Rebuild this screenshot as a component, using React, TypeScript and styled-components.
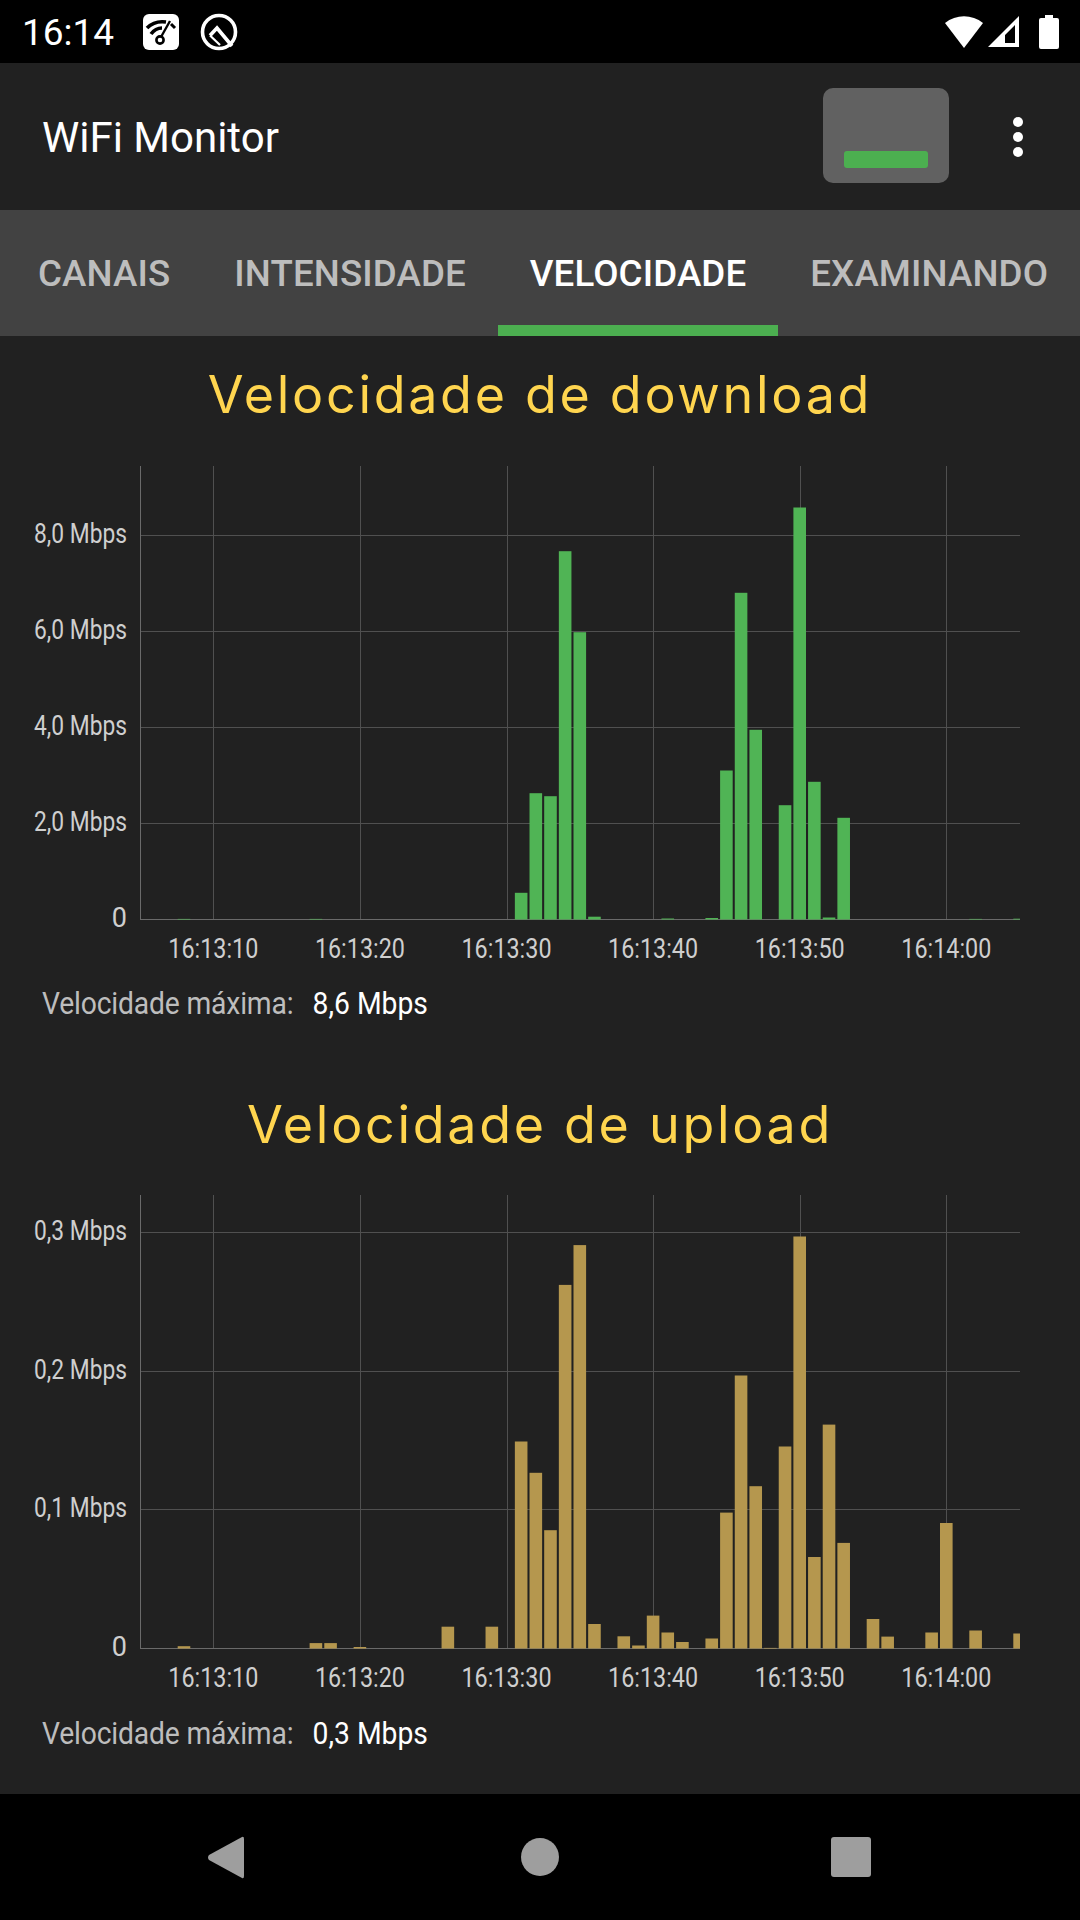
import { FunctionComponent } from 'react';
import styled, { createGlobalStyle } from 'styled-components';

const GlobalStyle = createGlobalStyle`
  html, body {
    margin: 0;
    padding: 0;
    background: #000;
  }
`;

const Screen = styled.div`
  width: 1080px;
  height: 1920px;
  display: flex;
  flex-direction: column;
  overflow: hidden;
  background: #212121;
  font-family: Roboto, "Liberation Sans", sans-serif;
`;

const StatusBar = styled.div`
  height: 63px;
  flex: none;
  box-sizing: border-box;
  padding: 0 21px 0 22px;
  display: flex;
  align-items: center;
  background: #000;
`;

const Clock = styled.div`
  width: 121px;
  padding-top: 2px;
  font-size: 37px;
  color: #fff;
`;

const StatusRight = styled.div`
  margin-left: auto;
  display: flex;
  align-items: center;
`;

const StatusIcon = styled.svg<{ gap?: number }>`
  display: block;
  flex: none;
  margin-left: ${({ gap }) => gap || 0}px;
`;

const AppBar = styled.div`
  height: 147px;
  flex: none;
  box-sizing: border-box;
  padding: 0 0 0 42px;
  display: flex;
  align-items: center;
  background: #212121;
`;

const AppTitle = styled.div`
  padding-top: 2px;
  font-size: 42px;
  color: #fff;
`;

const SpeedButton = styled.div`
  margin-left: auto;
  width: 126px;
  height: 95px;
  margin-top: -2px;
  box-sizing: border-box;
  padding: 0 21px 15px;
  display: flex;
  align-items: flex-end;
  border-radius: 10px;
  background: #616161;
`;

const SpeedLevel = styled.div`
  width: 100%;
  height: 17px;
  border-radius: 3px;
  background: #4caf50;
`;

const Kebab = styled.div`
  width: 131px;
  box-sizing: border-box;
  padding-left: 6px;
  display: flex;
  flex-direction: column;
  align-items: center;
  gap: 5px;
`;

const KebabDot = styled.div`
  width: 10px;
  height: 10px;
  border-radius: 50%;
  background: #fff;
`;

const TabBar = styled.div`
  height: 126px;
  flex: none;
  box-sizing: border-box;
  padding-left: 6px;
  display: flex;
  background: #424242;
`;

const Tab = styled.div<{ active?: boolean }>`
  box-sizing: border-box;
  height: 100%;
  padding: 12px 32px 0;
  display: flex;
  align-items: center;
  font-size: 36.7px;
  font-weight: 500;
  letter-spacing: 0.12px;
  white-space: nowrap;
  color: ${({ active }) => (active ? '#fff' : '#bdbdbd')};
  border-bottom: 11px solid ${({ active }) => (active ? '#4caf50' : 'transparent')};
`;

const Content = styled.div`
  flex: 1;
  display: flex;
  flex-direction: column;
`;

const Section = styled.div<{ gap: number }>`
  display: flex;
  flex-direction: column;
  margin-bottom: ${({ gap }) => gap}px;
`;

const Heading = styled.div`
  height: 113px;
  box-sizing: border-box;
  padding-top: 4px;
  display: flex;
  align-items: center;
  justify-content: center;
  font-family: Inter, sans-serif;
  font-size: 52px;
  font-weight: 400;
  letter-spacing: 2.7px;
  color: #ffd54f;
`;

const MaxRow = styled.div`
  height: 54px;
  padding-left: 42px;
  display: flex;
  align-items: center;
`;

// the device font is narrower than Roboto, so squeeze the row a little
const MaxText = styled.div`
  display: flex;
  font-size: 32px;
  white-space: nowrap;
  transform: scaleX(0.884);
  transform-origin: left center;
`;

const MaxLabel = styled.span`
  color: #bdbdbd;
  width: 306px;
  letter-spacing: -0.2px;
`;

const MaxValue = styled.span`
  color: #fff;
`;

const PlotSvg = styled.svg`
  display: block;
  flex: none;
`;

const AxisText = styled.text`
  font-family: Roboto, "Liberation Sans", sans-serif;
  font-size: 27px;
  fill: #cfcfcf;
`;

const NavBar = styled.div`
  height: 126px;
  flex: none;
  box-sizing: border-box;
  padding-left: 207px;
  display: flex;
  align-items: center;
  background: #000;
`;

const NavIcon = styled.svg<{ gap?: number }>`
  display: block;
  flex: none;
  margin-left: ${({ gap }) => gap || 0}px;
`;

const X_ORIGIN = 140.5;
const X_RIGHT = 1020;
const FIRST_TICK = 213.3;
const STEP = 14.66;
const BAR_WIDTH = 12.6;
const TICKS = ['16:13:10', '16:13:20', '16:13:30', '16:13:40', '16:13:50', '16:14:00'];

interface ChartProps {
  color: string;
  height: number;
  top: number;
  baseline: number;
  yTicks: { label: string; y: number }[];
  bars: [number, number][];
  clipId: string;
}

const BarChart: FunctionComponent<ChartProps> = ({
  color, height, top, baseline, yTicks, bars, clipId,
}) => (
  <PlotSvg width={1080} height={height} viewBox={`0 0 1080 ${height}`}>
    <defs>
      <clipPath id={clipId}>
        <rect x={X_ORIGIN} y={0} width={X_RIGHT - X_ORIGIN} height={height} />
      </clipPath>
    </defs>
    <g stroke="#505050" strokeWidth={1} shapeRendering="crispEdges">
      <line x1={X_ORIGIN} x2={X_ORIGIN} y1={top} y2={baseline} stroke="#6a6a6a" />
      {TICKS.map((t, i) => {
        const x = Math.round(FIRST_TICK + i * STEP * 10) + 0.5;
        return <line key={t} x1={x} x2={x} y1={top} y2={baseline} />;
      })}
      {yTicks.map((t) => (
        <line key={t.label} x1={X_ORIGIN} x2={X_RIGHT} y1={t.y} y2={t.y} />
      ))}
      <line x1={X_ORIGIN} x2={X_RIGHT} y1={baseline} y2={baseline} stroke="#6a6a6a" />
    </g>
    <g fill={color} clipPath={`url(#${clipId})`}>
      {bars.map(([s, h]) => (
        <rect
          key={s}
          x={FIRST_TICK + s * STEP - BAR_WIDTH / 2}
          y={baseline - h}
          width={BAR_WIDTH}
          height={h}
        />
      ))}
    </g>
    {yTicks.map((t) => (
      <AxisText
        key={t.label}
        x={127}
        y={t.y + 7}
        textAnchor="end"
        textLength={93}
        lengthAdjust="spacingAndGlyphs"
      >
        {t.label}
      </AxisText>
    ))}
    <AxisText x={127} y={baseline + 7} textAnchor="end">0</AxisText>
    {TICKS.map((t, i) => (
      <AxisText
        key={t}
        x={FIRST_TICK + i * STEP * 10}
        y={baseline + 38}
        textAnchor="middle"
        textLength={90}
        lengthAdjust="spacingAndGlyphs"
      >
        {t}
      </AxisText>
    ))}
  </PlotSvg>
);

const DOWNLOAD: [number, number][] = [
  [-2, 0.6], [7, 0.6], [21, 26.7], [22, 126.3], [23, 123.3], [24, 368.3], [25, 287.3], [26, 2.8],
  [31, 1], [34, 1.5], [35, 149], [36, 326.7], [37, 189.7], [39, 114.3], [40, 412], [41, 137.7],
  [42, 2], [43, 101.7], [52, 0.6], [55, 0.8],
];

const UPLOAD: [number, number][] = [
  [-2, 2.3], [7, 5.4], [8, 5.4], [10, 1.5], [16, 21.8], [19, 21.8], [21, 207], [22, 175.7],
  [23, 118.3], [24, 363.6], [25, 403.4], [26, 24.5], [28, 12.2], [29, 3], [30, 32.9], [31, 16],
  [32, 6.5], [34, 10], [35, 135.9], [36, 273], [37, 162.3], [38, 0.6], [39, 202], [40, 412],
  [41, 91.5], [42, 223.9], [43, 105.6], [45, 29.5], [46, 11.9], [49, 16], [50, 125.5], [52, 18],
  [55, 15],
];

const DOWNLOAD_TICKS = [
  { label: '8,0 Mbps', y: 86.5 },
  { label: '6,0 Mbps', y: 182.5 },
  { label: '4,0 Mbps', y: 278.5 },
  { label: '2,0 Mbps', y: 374.5 },
];

const UPLOAD_TICKS = [
  { label: '0,3 Mbps', y: 53.5 },
  { label: '0,2 Mbps', y: 192.5 },
  { label: '0,1 Mbps', y: 330.5 },
];

const App: FunctionComponent = () => (
  <Screen>
    <GlobalStyle />
    <StatusBar>
      <Clock>16:14</Clock>
      <StatusIcon width="36" height="36" viewBox="0 0 36 36">
        <rect width="36" height="36" rx="6" fill="#fff" />
        <path d="M4 14C9 9 16 7 23 8" stroke="#000" strokeWidth="3.6" fill="none" />
        <path d="M8 20C11 16 15 14 19 14" stroke="#000" strokeWidth="3.6" fill="none" />
        <path d="M18 23L27 7" stroke="#000" strokeWidth="2.4" />
        <path d="M28 10L32 14" stroke="#000" strokeWidth="3" />
        <circle cx="17" cy="26" r="3.6" fill="#fff" stroke="#000" strokeWidth="2.6" />
      </StatusIcon>
      <StatusIcon gap={21} width="38" height="38" viewBox="0 0 38 38">
        <circle cx="19" cy="19" r="16.5" fill="none" stroke="#fff" strokeWidth="3.6" />
        <path d="M10 22.5L17 15L32 33" fill="none" stroke="#fff" strokeWidth="3.6" />
        <path d="M10 22.5L20 32" fill="none" stroke="#fff" strokeWidth="2.2" />
      </StatusIcon>
      <StatusRight>
        <StatusIcon width="38" height="32" viewBox="0 0 38 32">
          <path d="M0 7C11 -2 27 -2 38 7L19 32Z" fill="#fff" />
        </StatusIcon>
        <StatusIcon gap={4} width="33" height="33" viewBox="0 0 33 33">
          <path fillRule="evenodd" d="M32 1V32H1ZM28 10L18 20V28H28Z" fill="#fff" />
        </StatusIcon>
        <StatusIcon gap={19} width="20" height="34" viewBox="0 0 20 34">
          <path d="M6 0H14V3H18Q20 3 20 5V32Q20 34 18 34H2Q0 34 0 32V5Q0 3 2 3H6Z" fill="#fff" />
        </StatusIcon>
      </StatusRight>
    </StatusBar>
    <AppBar>
      <AppTitle>WiFi Monitor</AppTitle>
      <SpeedButton><SpeedLevel /></SpeedButton>
      <Kebab>
        <KebabDot />
        <KebabDot />
        <KebabDot />
      </Kebab>
    </AppBar>
    <TabBar>
      <Tab>CANAIS</Tab>
      <Tab>INTENSIDADE</Tab>
      <Tab active>VELOCIDADE</Tab>
      <Tab>EXAMINANDO</Tab>
    </TabBar>
    <Content>
      <Section gap={36}>
        <Heading>Velocidade de download</Heading>
        <BarChart
          clipId="down"
          color="#50b455"
          height={527}
          top={17}
          baseline={470.5}
          yTicks={DOWNLOAD_TICKS}
          bars={DOWNLOAD}
        />
        <MaxRow>
          <MaxText>
            <MaxLabel>Velocidade máxima:</MaxLabel>
            <MaxValue>8,6 Mbps</MaxValue>
          </MaxText>
        </MaxRow>
      </Section>
      <Section gap={0}>
        <Heading>Velocidade de upload</Heading>
        <BarChart
          clipId="up"
          color="#b5974e"
          height={527}
          top={16}
          baseline={469.5}
          yTicks={UPLOAD_TICKS}
          bars={UPLOAD}
        />
        <MaxRow>
          <MaxText>
            <MaxLabel>Velocidade máxima:</MaxLabel>
            <MaxValue>0,3 Mbps</MaxValue>
          </MaxText>
        </MaxRow>
      </Section>
    </Content>
    <NavBar>
      <NavIcon width="38" height="43" viewBox="0 0 38 43">
        <path d="M35 1Q37 0 37 3V40Q37 43 35 42L2 24Q0 21.5 2 19Z" fill="#9e9e9e" />
      </NavIcon>
      <NavIcon gap={276} width="38" height="38" viewBox="0 0 38 38">
        <circle cx="19" cy="19" r="19" fill="#9e9e9e" />
      </NavIcon>
      <NavIcon gap={272} width="40" height="40" viewBox="0 0 40 40">
        <rect width="40" height="40" rx="3" fill="#9e9e9e" />
      </NavIcon>
    </NavBar>
  </Screen>
);

export default App;
